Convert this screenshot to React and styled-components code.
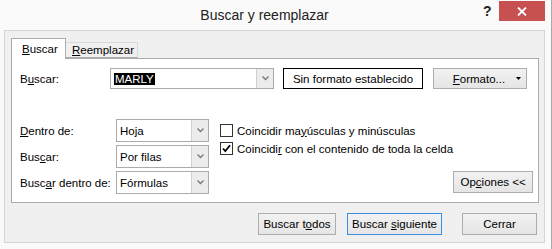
import styled, { createGlobalStyle } from "styled-components";

const GlobalStyle = createGlobalStyle`
  html, body {
    margin: 0;
    padding: 0;
    background: #fff;
  }
  body {
    font-family: "Liberation Sans", Arial, sans-serif;
    font-size: 11.5px;
    color: #000;
  }
`;

const Window = styled.div`
  width: 552px;
  height: 249px;
  box-sizing: border-box;
  background: #fafafa;
  border-right: 1px solid #a9a9a9;
  display: flex;
  flex-direction: column;
`;

const TitleBar = styled.div`
  height: 30px;
  display: flex;
  align-items: flex-start;
`;

const Title = styled.div`
  flex: 1;
  text-align: center;
  padding-left: 46px;
  padding-top: 7px;
  font-size: 14px;
  color: #222;
`;

const HelpMark = styled.div`
  width: 16px;
  padding-top: 3px;
  font-weight: bold;
  font-size: 14px;
  color: #222;
`;

const CloseButton = styled.div`
  width: 46px;
  height: 20px;
  margin: 1px 6px 0 0;
  background: #c75050;
  display: flex;
  align-items: center;
  justify-content: center;
`;

const Client = styled.div`
  margin: 0 6px 0 4px;
  height: 213px;
  box-sizing: border-box;
  background: #f0f0f0;
  border: 1px solid #d4d4d4;
  padding: 7px 6px 0 6px;
  display: flex;
  flex-direction: column;
`;

const TabStrip = styled.div`
  display: flex;
  align-items: flex-end;
  height: 20px;
  position: relative;
  z-index: 1;
`;

const Tab = styled.div`
  box-sizing: border-box;
  height: ${(p) => (p.$active ? "21px" : "16px")};
  margin-bottom: ${(p) => (p.$active ? "-1px" : "0")};
  padding: ${(p) => (p.$active ? "4px 10px 0 10px" : "1px 6px 0 6px")};
  width: ${(p) => p.$width}px;
  background: ${(p) => (p.$active ? "#fff" : "#f0f0f0")};
  border: 1px solid ${(p) => (p.$active ? "#acacac" : "#d9d9d9")};
  border-bottom: ${(p) => (p.$active ? "none" : "1px solid #acacac")};
  ${(p) => (p.$active ? "" : "border-left: none;")}
`;

const Panel = styled.div`
  width: 528px;
  height: 145px;
  box-sizing: border-box;
  background: #fff;
  border: 1px solid #acacac;
  padding: 9px 11px 0 8px;
  display: flex;
  flex-direction: column;
`;

const SearchRow = styled.div`
  display: flex;
  align-items: center;
  height: 21px;
`;

const Label = styled.div`
  width: ${(p) => p.$width}px;
  flex-shrink: 0;
  white-space: nowrap;
`;

const Combo = styled.div`
  box-sizing: border-box;
  width: ${(p) => p.$width}px;
  height: ${(p) => p.$height}px;
  border: 1px solid #ababab;
  background: #fff;
  display: flex;
  align-items: center;
`;

const ComboText = styled.div`
  flex: 1;
  padding-left: 3px;
`;

const Selected = styled.span`
  background: #000;
  color: #fff;
  padding: 0 1px;
`;

const DropButton = styled.div`
  width: 17px;
  height: 100%;
  box-sizing: border-box;
  border-left: 1px solid #d0d0d0;
  background: #ececec;
  display: flex;
  align-items: center;
  justify-content: center;
`;

const FormatBox = styled.div`
  box-sizing: border-box;
  width: 141px;
  height: 21px;
  margin-left: 9px;
  border: 1px solid #000;
  background: #fff;
  display: flex;
  align-items: center;
  justify-content: center;
`;

const Button = styled.div`
  box-sizing: border-box;
  width: ${(p) => p.$width}px;
  height: ${(p) => p.$height || 22}px;
  border: 1px solid ${(p) => (p.$default ? "#3c8fe0" : "#adadad")};
  background: linear-gradient(#f2f2f2, #e5e5e5);
  display: flex;
  align-items: center;
  justify-content: center;
  white-space: nowrap;
`;

const MenuButton = styled(Button)`
  justify-content: flex-start;
  padding: 0 5px 0 19px;
  margin-left: 10px;

  svg {
    margin-left: auto;
  }
`;

const Options = styled.div`
  margin-top: 30px;
  display: flex;
  align-items: flex-start;
`;

const FieldGrid = styled.div`
  display: grid;
  grid-template-columns: 96px 93px;
  row-gap: 3px;
  align-items: center;
  flex-shrink: 0;
`;

const Checks = styled.div`
  margin-left: 11px;
  padding-top: 5px;
  display: flex;
  flex-direction: column;
  gap: 5px;
  flex-shrink: 0;
  white-space: nowrap;
`;

const CheckRow = styled.div`
  display: flex;
  align-items: center;
  gap: 4px;
  height: 13px;
`;

const Box = styled.div`
  width: 13px;
  height: 13px;
  box-sizing: border-box;
  border: 1px solid #333;
  background: #fff;
  display: flex;
  align-items: center;
  justify-content: center;
`;

const OptionsButtonWrap = styled.div`
  margin-left: auto;
  margin-top: 52px;
`;

const Footer = styled.div`
  display: flex;
  justify-content: flex-end;
  align-items: center;
  padding: 10px 1px 0 0;
`;

const Spacer = styled.div`
  width: ${(p) => p.$width}px;
`;

const Chevron = () => (
  <svg width="7" height="5" viewBox="0 0 7 5">
    <polyline points="0.5,0.5 3.5,3.5 6.5,0.5" fill="none" stroke="#7a7a7a" strokeWidth="1.4" />
  </svg>
);

const Select = ({ value }) => (
  <Combo $width={93} $height={23}>
    <ComboText>{value}</ComboText>
    <DropButton>
      <Chevron />
    </DropButton>
  </Combo>
);

export default function App() {
  return (
    <>
      <GlobalStyle />
      <Window>
        <TitleBar>
          <Title>Buscar y reemplazar</Title>
          <HelpMark>?</HelpMark>
          <CloseButton>
            <svg width="10" height="9" viewBox="0 0 10 9">
              <path d="M1 0.5 L9 8.5 M9 0.5 L1 8.5" stroke="#fff" strokeWidth="1.8" />
            </svg>
          </CloseButton>
        </TitleBar>
        <Client>
          <TabStrip>
            <Tab $active $width={55}>
              <u>B</u>uscar
            </Tab>
            <Tab $width={72}>
              <u>R</u>eemplazar
            </Tab>
          </TabStrip>
          <Panel>
            <SearchRow>
              <Label $width={90}>
                B<u>u</u>scar:
              </Label>
              <Combo $width={166} $height={21}>
                <ComboText>
                  <Selected>MARLY</Selected>
                </ComboText>
                <DropButton>
                  <Chevron />
                </DropButton>
              </Combo>
              <FormatBox>Sin formato establecido</FormatBox>
              <MenuButton $width={95} $height={21}>
                <span>
                  <u>F</u>ormato...
                </span>
                <svg width="5" height="3" viewBox="0 0 5 3">
                  <polygon points="0,0 5,0 2.5,3" fill="#000" />
                </svg>
              </MenuButton>
            </SearchRow>
            <Options>
              <FieldGrid>
                <Label>
                  <u>D</u>entro de:
                </Label>
                <Select value="Hoja" />
                <Label>
                  Bus<u>c</u>ar:
                </Label>
                <Select value="Por filas" />
                <Label>
                  Busc<u>a</u>r dentro de:
                </Label>
                <Select value="Fórmulas" />
              </FieldGrid>
              <Checks>
                <CheckRow>
                  <Box />
                  <span>
                    Coincidir ma<u>y</u>úsculas y minúsculas
                  </span>
                </CheckRow>
                <CheckRow>
                  <Box>
                    <svg width="9" height="9" viewBox="0 0 9 9">
                      <path d="M1 4.5 L3.3 7 L8 1.2" fill="none" stroke="#000" strokeWidth="1.8" />
                    </svg>
                  </Box>
                  <span>
                    Coincidi<u>r</u> con el contenido de toda la celda
                  </span>
                </CheckRow>
              </Checks>
              <OptionsButtonWrap>
                <Button $width={80}>
                  <span>
                    Op<u>c</u>iones &lt;&lt;
                  </span>
                </Button>
              </OptionsButtonWrap>
            </Options>
          </Panel>
          <Footer>
            <Button $width={78}>
              <span>
                Buscar t<u>o</u>dos
              </span>
            </Button>
            <Spacer $width={11} />
            <Button $width={95} $default>
              <span>
                Buscar <u>s</u>iguiente
              </span>
            </Button>
            <Spacer $width={20} />
            <Button $width={75}>Cerrar</Button>
          </Footer>
        </Client>
      </Window>
    </>
  );
}
